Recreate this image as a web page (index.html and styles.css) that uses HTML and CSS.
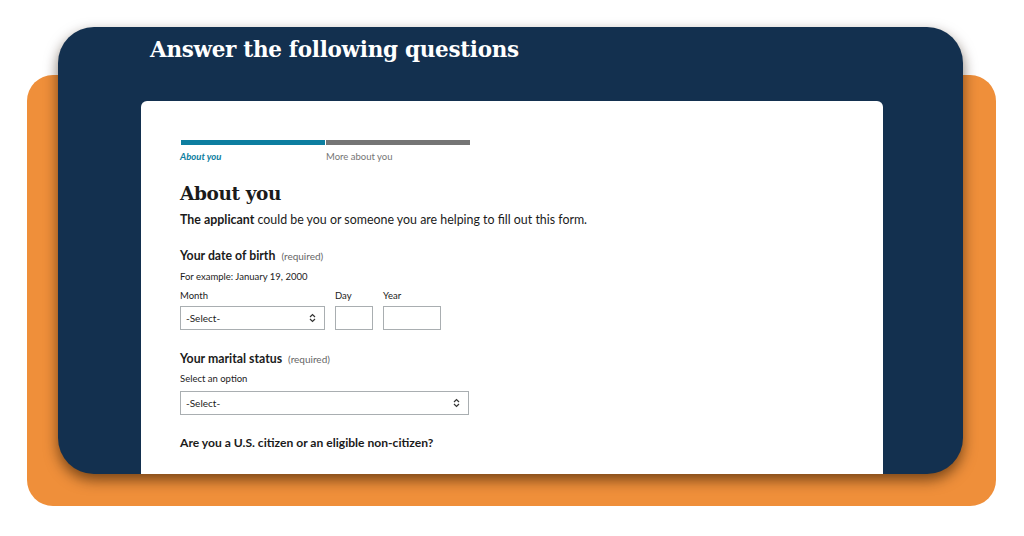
FILE: index.html
```html
<!DOCTYPE html>
<html lang="en">
<head>
<meta charset="utf-8">
<title>Answer the following questions</title>
<link rel="stylesheet" href="styles.css">
</head>
<body>
<div class="stage">
  <div class="orange"></div>
  <div class="navy">
    <h1 class="title">Answer the following questions</h1>
    <div class="sheet">
      <div class="steps">
        <div class="step active"><span class="bar"></span><span class="step-label">About you</span></div>
        <div class="step"><span class="bar"></span><span class="step-label">More about you</span></div>
      </div>
      <h2 class="heading">About you</h2>
      <p class="intro"><strong>The applicant</strong> could be you or someone you are helping to fill out this form.</p>

      <div class="field">
        <div class="label">Your date of birth <span class="req">(required)</span></div>
        <div class="hint">For example: January 19, 2000</div>
        <div class="date-row">
          <div class="date-col">
            <div class="sub">Month</div>
            <div class="select month"><span>-Select-</span>
              <svg class="chev" width="7" height="10" viewBox="0 0 7 10"><path d="M1 4 L3.5 1.5 L6 4 M1 6 L3.5 8.5 L6 6" fill="none" stroke="#333" stroke-width="1.2"/></svg>
            </div>
          </div>
          <div class="date-col">
            <div class="sub">Day</div>
            <div class="box day"></div>
          </div>
          <div class="date-col">
            <div class="sub">Year</div>
            <div class="box year"></div>
          </div>
        </div>
      </div>

      <div class="field second">
        <div class="label">Your marital status <span class="req">(required)</span></div>
        <div class="hint opt">Select an option</div>
        <div class="select wide"><span>-Select-</span>
          <svg class="chev" width="7" height="10" viewBox="0 0 7 10"><path d="M1 4 L3.5 1.5 L6 4 M1 6 L3.5 8.5 L6 6" fill="none" stroke="#333" stroke-width="1.2"/></svg>
        </div>
      </div>

      <div class="label question">Are you a U.S. citizen or an eligible non-citizen?</div>
    </div>
  </div>
</div>
</body>
</html>
```

FILE: styles.css
```css
html, body {
  margin: 0;
  padding: 0;
  background: #ffffff;
}
body {
  width: 1024px;
  height: 536px;
  overflow: hidden;
  font-family: Lato, "Noto Sans", sans-serif;
  color: #1b1b1b;
}
.stage {
  display: grid;
  padding: 27px 0 0 27px;
}
.orange {
  grid-area: 1 / 1;
  margin-top: 48px;
  width: 969px;
  height: 431px;
  background: #ef8f3a;
  border-radius: 26px;
}
.navy {
  grid-area: 1 / 1;
  margin-left: 31px;
  width: 905px;
  height: 447px;
  background: #13304f;
  border-radius: 36px;
  box-shadow: 0 6px 14px rgba(40, 20, 0, 0.6);
  overflow: hidden;
  display: flex;
  flex-direction: column;
  position: relative;
  z-index: 1;
}
.title {
  margin: 9px 0 0 92px;
  height: 65px;
  font-family: "DejaVu Serif", serif;
  font-weight: bold;
  font-size: 21.5px;
  letter-spacing: -0.3px;
  color: #ffffff;
  line-height: 28px;
}
.sheet {
  flex: 1;
  margin: 0 80px 0 83px;
  background: #ffffff;
  border-radius: 6px 6px 0 0;
  padding: 39px 0 0 39px;
}
.steps {
  display: flex;
  gap: 1px;
  padding-left: 1px;
}
.step {
  width: 144px;
  display: flex;
  flex-direction: column;
}
.bar {
  height: 5px;
  background: #757575;
}
.step.active .bar {
  background: #0d7ea0;
}
.step-label {
  margin-top: 6px;
  font-size: 9.5px;
  color: #757575;
  line-height: 12px;
}
.step.active .step-label {
  color: #0d7ea0;
  font-weight: bold;
  font-style: italic;
  margin-left: -1px;
}
.heading {
  margin: 18px 0 0 0;
  font-family: "DejaVu Serif", serif;
  font-weight: bold;
  font-size: 18.5px;
  letter-spacing: -0.4px;
  line-height: 26px;
  color: #1b1b1b;
}
.intro {
  margin: 5px 0 0 0;
  font-size: 12.4px;
  line-height: 16px;
}
.intro strong {
  font-weight: bold;
}
.field {
  margin-top: 20px;
}
.field.second {
  margin-top: 21px;
}
.label {
  font-size: 12.3px;
  font-weight: bold;
  line-height: 16px;
}
.req {
  font-weight: normal;
  font-size: 10px;
  color: #666;
  margin-left: 3px;
}
.hint {
  margin-top: 7px;
  font-size: 9.5px;
  line-height: 12px;
}
.hint.opt {
  margin-top: 6px;
}
.date-row {
  display: flex;
  gap: 10px;
  margin-top: 7px;
}
.date-col {
  display: flex;
  flex-direction: column;
}
.sub {
  font-size: 9.5px;
  line-height: 12px;
  margin-bottom: 4px;
}
.select {
  box-sizing: border-box;
  height: 24px;
  border: 1px solid #a9aeb1;
  display: flex;
  align-items: center;
  justify-content: space-between;
  padding: 0 8px 0 5px;
  font-size: 10px;
}
.select.month {
  width: 145px;
}
.select.wide {
  width: 289px;
  margin-top: 6px;
  height: 24px;
}
.box {
  box-sizing: border-box;
  height: 24px;
  border: 1px solid #a9aeb1;
}
.box.day { width: 38px; }
.box.year { width: 58px; }
.question {
  margin-top: 20px;
  font-size: 12.1px;
}
```
